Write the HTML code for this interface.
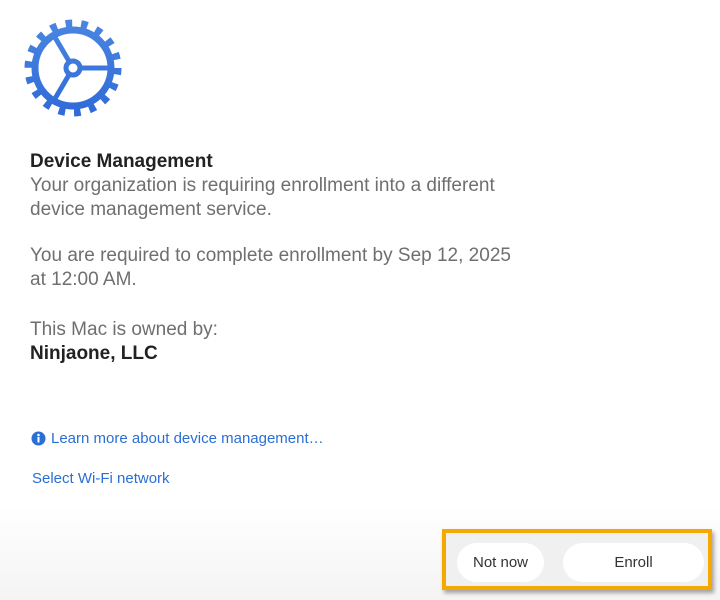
<!DOCTYPE html>
<html><head><style>
body{margin:0;width:720px;height:600px;background:#fff;font-family:"Liberation Sans",sans-serif;position:relative;overflow:hidden}
.t{position:absolute;left:30px;font-size:19px;color:#6f6f6f;line-height:24px;white-space:nowrap}
.b{color:#222;font-weight:bold;font-size:19px}
.l{position:absolute;font-size:15px;color:#2a6fd6;white-space:nowrap}
.foot{position:absolute;left:0;top:505px;width:720px;height:95px;background:linear-gradient(#fff,#f4f4f4)}
.box{position:absolute;left:442px;top:529px;width:262px;height:53px;border:4px solid #f5a800;background:#f0f0f0;box-shadow:2px 3px 4px rgba(0,0,0,.35)}
.btn{position:absolute;top:543px;height:39px;background:#fff;border-radius:20px;font-size:15px;color:#333;text-align:center;line-height:39px}
</style></head><body>
<svg style="position:absolute;left:0;top:0" width="150" height="130" viewBox="0 0 150 130">
<defs><linearGradient id="g" gradientUnits="userSpaceOnUse" x1="0" y1="20" x2="0" y2="116"><stop offset="0" stop-color="#4a86e0"/><stop offset="1" stop-color="#2f6ad8"/></linearGradient></defs>
<g stroke="url(#g)" fill="none">
<circle cx="73" cy="68" r="44" stroke-width="9" stroke-dasharray="6.5 8.86" stroke-linecap="butt"/>
<circle cx="73" cy="68" r="38" stroke-width="7"/>
<circle cx="73" cy="68" r="7" stroke-width="5"/>
<line x1="80" y1="68" x2="111" y2="68" stroke-width="5"/>
<line x1="69.5" y1="62" x2="53" y2="34" stroke-width="5"/>
<line x1="69.5" y1="74" x2="53" y2="102" stroke-width="5"/>
</g></svg>
<div class="t b" style="top:150px">Device Management</div>
<div class="t" style="top:174px">Your organization is requiring enrollment into a different<br>device management service.</div>
<div class="t" style="top:244px">You are required to complete enrollment by Sep 12, 2025<br>at 12:00 AM.</div>
<div class="t" style="top:318px">This Mac is owned by:</div>
<div class="t b" style="top:342px">Ninjaone, LLC</div>
<svg style="position:absolute;left:31px;top:431px" width="15" height="15"><circle cx="7.5" cy="7.5" r="7" fill="#2a6fd6"/><circle cx="7.5" cy="4" r="1.3" fill="#fff"/><rect x="6.5" y="6" width="2" height="5.5" fill="#fff"/></svg>
<div class="l" style="left:51px;top:430px">Learn more about device management…</div>
<div class="l" style="left:32px;top:470px">Select Wi-Fi network</div>
<div class="foot"></div>
<div class="box"></div>
<div class="btn" style="left:457px;width:87px">Not now</div>
<div class="btn" style="left:563px;width:141px">Enroll</div>
</body></html>
